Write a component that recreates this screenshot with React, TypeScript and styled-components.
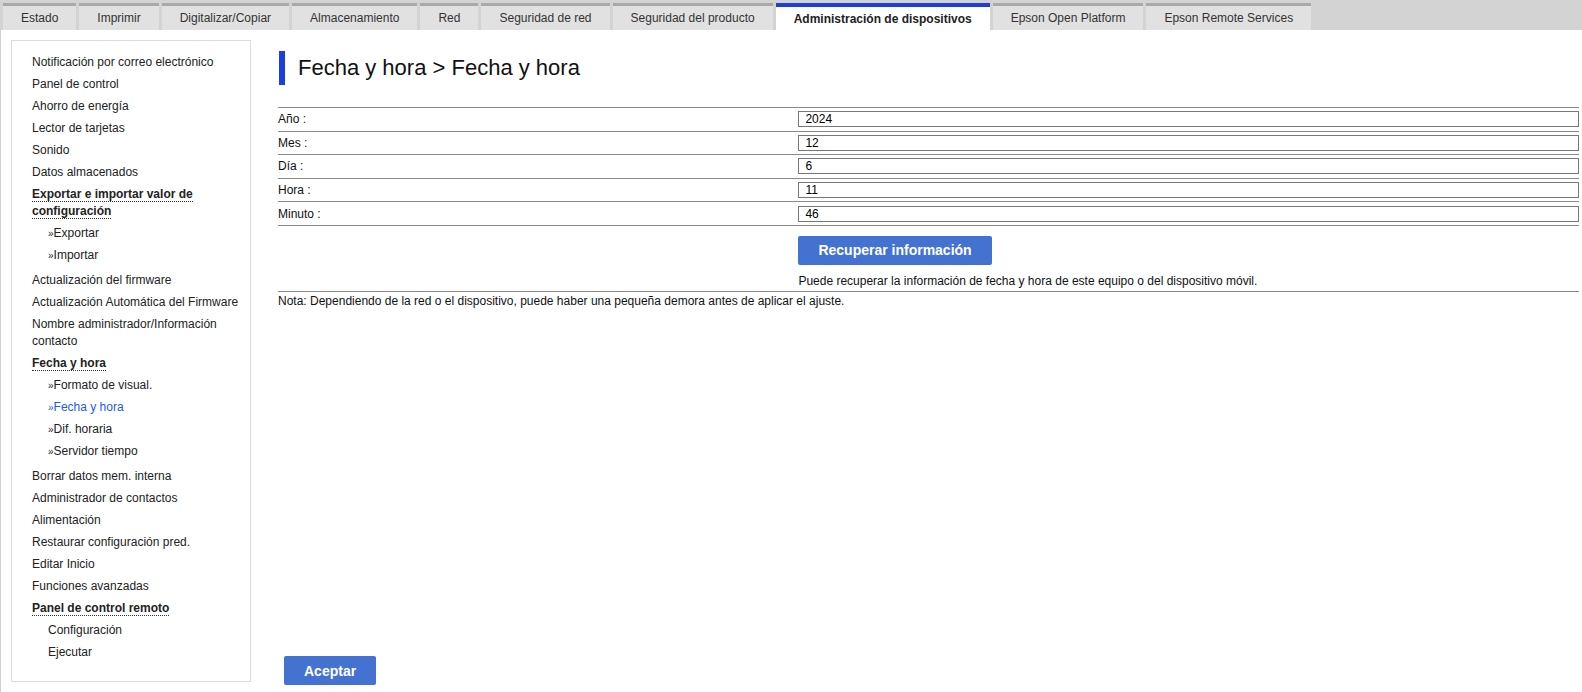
import React from "react";
import styled, { createGlobalStyle, css } from "styled-components";

const GlobalStyle = createGlobalStyle`
	html, body
	{
		margin: 0;
		padding: 0;
		overflow: hidden;
		background: #fff;
	}

	body
	{
		font-family: "Liberation Sans", Arial, sans-serif;
		font-size: 12px;
		color: #111;
	}
`;

const TabBar = styled.nav`
	display: flex;
	align-items: flex-end;
	gap: 3px;
	height: 30px;
	padding-left: 3px;
	background-color: #d3d3d3;
`;

const Tab = styled.div<{$active?: boolean}>`
	display: flex;
	align-items: center;
	box-sizing: border-box;
	height: 27px;
	padding: 0 18px;
	border-top: 3px solid #a9a9a9;
	background-color: #e1e1e1;
	color: #333;
	font-size: 12px;
	white-space: nowrap;

	${props => props.$active && css`
		border-top: 4px solid #1c3de0;
		background-color: #fff;
		color: #222;
		font-weight: bold;
	`}
`;

const Layout = styled.div`
	display: flex;
	align-items: stretch;
	border-left: 1px solid #d0d0d0;
	padding: 10px 3px 12px 10px;
`;

const Sidebar = styled.aside`
	box-sizing: border-box;
	width: 240px;
	flex-shrink: 0;
	margin-bottom: 3px;
	padding: 10px 2px 15px 20px;
	border: 1px solid #dcdcdc;
`;

const MenuList = styled.ul`
	list-style: none;
	margin: 0;
	padding: 0;
`;

const SubList = styled.ul`
	list-style: none;
	margin: 0 0 3px;
	padding: 0 0 0 16px;
`;

const MenuItem = styled.li<{$current?: boolean}>`
	padding: 2.5px 0;
	line-height: 17px;
	font-size: 12px;
	color: ${props => props.$current ? "#1d5ce6" : "#222"};
`;

const Heading = styled.span`
	font-weight: bold;
	color: #222;
	border-bottom: 1px dotted #333;
`;

const Chevron = styled.span`
	font-size: 10px;
`;

const Main = styled.main`
	flex: 1;
	display: flex;
	flex-direction: column;
	margin-left: 27px;
	min-width: 0;
`;

const Title = styled.h1`
	margin: 11px 0 22px 1px;
	padding-left: 13px;
	border-left: 6px solid #1c3de0;
	font-size: 22px;
	font-weight: normal;
	line-height: 34px;
	color: #111;
`;

const FormTable = styled.div`
	border-top: 1px solid #8a8a8a;
`;

const Row = styled.div`
	display: grid;
	grid-template-columns: 40% 60%;
	align-items: center;
	padding: 3.3px 0;
	border-bottom: 1px solid #8a8a8a;
`;

const ActionRow = styled(Row)`
	align-items: start;
	padding: 10px 0 3px;
`;

const Label = styled.div`
	font-size: 12px;
	color: #111;
`;

const Field = styled.input`
	box-sizing: border-box;
	width: 100%;
	height: 16px;
	margin: 0;
	padding: 0 6px;
	border: 1px solid #767676;
	font-family: "Liberation Sans", Arial, sans-serif;
	font-size: 12px;
	color: #000;
	outline: none;
`;

const Button = styled.button`
	height: 29px;
	padding: 0 20px;
	border: none;
	border-radius: 2px;
	background-color: #4472d0;
	color: #fff;
	font-family: "Liberation Sans", Arial, sans-serif;
	font-size: 14px;
	font-weight: bold;
	cursor: pointer;
`;

const Hint = styled.p`
	margin: 9px 0 0;
	line-height: 14px;
	font-size: 12px;
	color: #111;
`;

const Note = styled.p`
	margin: 2px 0 0;
	line-height: 14px;
	font-size: 12px;
	color: #111;
`;

const Footer = styled.div`
	margin-top: auto;
	padding-left: 6px;
`;

const tabs = [
	"Estado",
	"Imprimir",
	"Digitalizar/Copiar",
	"Almacenamiento",
	"Red",
	"Seguridad de red",
	"Seguridad del producto",
	"Administración de dispositivos",
	"Epson Open Platform",
	"Epson Remote Services",
];

const fields = [
	{label: "Año :", value: "2024"},
	{label: "Mes :", value: "12"},
	{label: "Día :", value: "6"},
	{label: "Hora :", value: "11"},
	{label: "Minuto :", value: "46"},
];

function Sub ({items, current, marks = true}: {items: string[], current?: string, marks?: boolean})
{
	return (
		<SubList>
		{
			items.map(item =>
				<MenuItem key = {item} $current = {item === current}>
					{marks && <Chevron>»</Chevron>}{item}
				</MenuItem>
			)
		}
		</SubList>
	);
}

export default function App ()
{
	return (
		<>
			<GlobalStyle/>
			<TabBar>
			{
				tabs.map(tab =>
					<Tab key = {tab} $active = {tab === "Administración de dispositivos"}>{tab}</Tab>
				)
			}
			</TabBar>
			<Layout>
				<Sidebar>
					<MenuList>
						<MenuItem>Notificación por correo electrónico</MenuItem>
						<MenuItem>Panel de control</MenuItem>
						<MenuItem>Ahorro de energía</MenuItem>
						<MenuItem>Lector de tarjetas</MenuItem>
						<MenuItem>Sonido</MenuItem>
						<MenuItem>Datos almacenados</MenuItem>
						<MenuItem><Heading>Exportar e importar valor de configuración</Heading></MenuItem>
						<Sub items = {["Exportar", "Importar"]}/>
						<MenuItem>Actualización del firmware</MenuItem>
						<MenuItem>Actualización Automática del Firmware</MenuItem>
						<MenuItem>Nombre administrador/Información contacto</MenuItem>
						<MenuItem><Heading>Fecha y hora</Heading></MenuItem>
						<Sub
							items = {["Formato de visual.", "Fecha y hora", "Dif. horaria", "Servidor tiempo"]}
							current = "Fecha y hora"
						/>
						<MenuItem>Borrar datos mem. interna</MenuItem>
						<MenuItem>Administrador de contactos</MenuItem>
						<MenuItem>Alimentación</MenuItem>
						<MenuItem>Restaurar configuración pred.</MenuItem>
						<MenuItem>Editar Inicio</MenuItem>
						<MenuItem>Funciones avanzadas</MenuItem>
						<MenuItem><Heading>Panel de control remoto</Heading></MenuItem>
						<Sub items = {["Configuración", "Ejecutar"]} marks = {false}/>
					</MenuList>
				</Sidebar>
				<Main>
					<Title>Fecha y hora &gt; Fecha y hora</Title>
					<FormTable>
					{
						fields.map(field =>
							<Row key = {field.label}>
								<Label>{field.label}</Label>
								<Field type = "text" defaultValue = {field.value}/>
							</Row>
						)
					}
						<ActionRow>
							<div/>
							<div>
								<Button type = "button">Recuperar información</Button>
								<Hint>Puede recuperar la información de fecha y hora de este equipo o del dispositivo móvil.</Hint>
							</div>
						</ActionRow>
					</FormTable>
					<Note>Nota: Dependiendo de la red o el dispositivo, puede haber una pequeña demora antes de aplicar el ajuste.</Note>
					<Footer>
						<Button type = "button">Aceptar</Button>
					</Footer>
				</Main>
			</Layout>
		</>
	);
}
